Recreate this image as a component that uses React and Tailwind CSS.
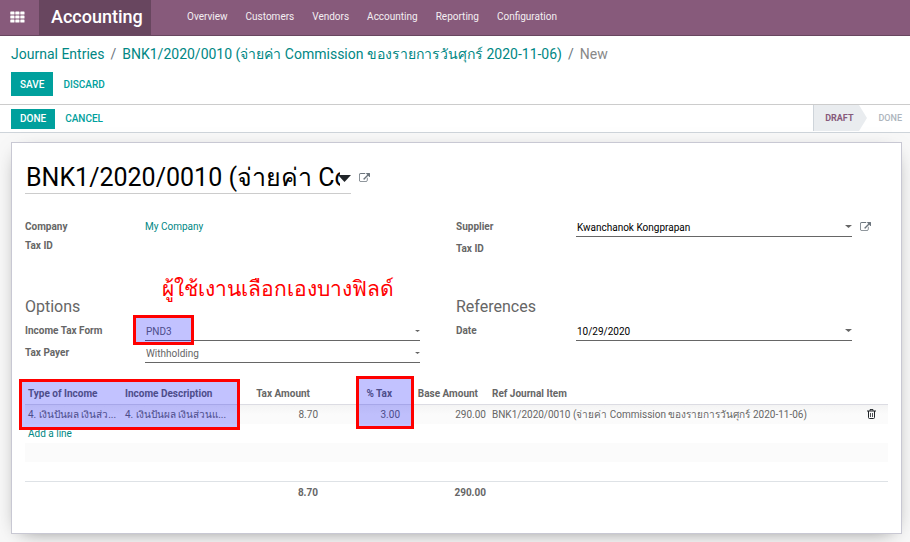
import React from "react";

const MENU = ["Overview", "Customers", "Vendors", "Accounting", "Reporting", "Configuration"];

const MOVE_NAME = "BNK1/2020/0010 (จ่ายค่า Commission ของรายการวันศุกร์ 2020-11-06)";

function AppsIcon() {
  return (
    <svg width="15" height="12" viewBox="0 0 15 12" fill="currentColor" aria-hidden="true">
      {[0, 4, 8].map((y) =>
        [0, 5, 10].map((x) => <rect key={`${x}-${y}`} x={x + 0.3} y={y + 0.4} width="4.200" height="3.100" rx="0.6" />)
      )}
    </svg>
  );
}

function ExternalIcon() {
  return (
    <svg width="11" height="10" viewBox="0 0 1792 1600" fill="currentColor" aria-hidden="true">
      <path d="M1408 800v320q0 119-84.500 203.500t-203.500 84.500h-832q-119 0-203.500-84.500t-84.500-203.500v-832q0-119 84.500-203.500t203.500-84.500h704q14 0 23 9t9 23v64q0 14-9 23t-23 9h-704q-66 0-113 47t-47 113v832q0 66 47 113t113 47h832q66 0 113-47t47-113v-320q0-14 9-23t23-9h64q14 0 23 9t9 23zm384-736v512q0 26-19 45t-45 19-45-19l-176-176-652 652q-10 10-23 10t-23-10l-114-114q-10-10-10-23t10-23l652-652-176-176q-19-19-19-45t19-45 45-19h512q26 0 45 19t19 45z" />
    </svg>
  );
}

function TrashIcon() {
  return (
    <svg width="9" height="10" viewBox="0 0 9 10" fill="none" stroke="currentColor" aria-hidden="true">
      <path d="M0 2h9M3 1.800V.6h3v1.200" />
      <path d="M1.500 2v6.500q0 1 1 1h4q1 0 1-1V2" />
      <path d="M3.500 4v4M5.500 4v4" strokeWidth="0.8" />
    </svg>
  );
}

function Caret({ className }) {
  return (
    <svg className={className} viewBox="0 0 8 4" fill="currentColor" preserveAspectRatio="none" aria-hidden="true">
      <path d="M0 0h8L4 4z" />
    </svg>
  );
}

function Label({ htmlFor, children }) {
  return (
    <label htmlFor={htmlFor} className="font-bold leading-[21px]">
      {children}
    </label>
  );
}

function SelectRow({ id, label, value, children }) {
  return (
    <div className="grid h-[22px] grid-cols-[120px_1fr_36px]">
      <Label htmlFor={id}>{label}</Label>
      <div className="relative h-[21px] border-b border-[#666]">
        <select id={id} defaultValue={value} className="block h-5 w-full appearance-none bg-transparent pt-0.5 pl-px outline-none">
          <option>{value}</option>
        </select>
        <Caret className="absolute top-[10px] right-0 h-[2px] w-[5px]" />
        {children}
      </div>
    </div>
  );
}

function InputRow({ id, label, value, link }) {
  return (
    <div className="grid h-[22px] grid-cols-[120px_1fr_36px]">
      <Label htmlFor={id}>{label}</Label>
      <div className="relative h-[21px] border-b border-[#666]">
        <input id={id} defaultValue={value} className="block h-5 w-full bg-transparent pt-0.5 pr-3 pl-px text-black outline-none" />
        <Caret className="absolute top-[9px] right-0 h-[3px] w-[7px]" />
      </div>
      {link && (
        <button type="button" aria-label="External link" className="flex h-[21px] items-center pl-2 text-[#6c757d]">
          <ExternalIcon />
        </button>
      )}
    </div>
  );
}

function StaticRow({ label, children }) {
  return (
    <div className="grid h-[19px] grid-cols-[120px_1fr_36px] leading-[21px]">
      <span className="font-bold">{label}</span>
      <span>{children}</span>
    </div>
  );
}

const MARK = "pointer-events-none absolute border-3 border-[#f00] bg-[#00f]/24";

export default function App() {
  return (
    <div className="min-h-screen bg-[#f8f8f8] font-['Roboto',sans-serif] text-[10px] text-[#666]">
      <header className="flex h-9 items-stretch border-b border-[#68465f] bg-[#875a7b] text-white">
        <button type="button" aria-label="Apps" className="flex w-[39px] items-center pb-0.5 pl-2.5">
          <AppsIcon />
        </button>
        <a href="#" className="flex w-28 items-center bg-[#68465f] px-3 pb-0.5 text-lg leading-none font-medium">
          Accounting
        </a>
        <nav className="ml-7 flex items-center gap-0.5 pb-0.5">
          {MENU.map((m) => (
            <a key={m} href="#" className="px-2 text-[#f3eef2]">
              {m}
            </a>
          ))}
        </nav>
      </header>

      <section className="border-b border-[#ccc] bg-white px-[11px] pt-2 pb-2">
        <nav className="flex h-5 items-center gap-[6px] whitespace-nowrap text-[14px] text-[#008784]">
          <a href="#">Journal Entries</a>
          <span className="text-[#6c757d]">/</span>
          <a href="#">{MOVE_NAME}</a>
          <span className="text-[#6c757d]">/</span>
          <span className="text-[#888]">New</span>
        </nav>
        <div className="mt-2 flex h-6 gap-[10px] font-medium">
          <button type="button" className="bg-[#00a09d] px-[9px] text-white">SAVE</button>
          <button type="button" className="text-[#00a09d]">DISCARD</button>
        </div>
      </section>

      <section className="flex h-7 items-stretch justify-between border-b border-[#ced4da] bg-white pl-[11px]">
        <div className="flex items-center gap-[10px] font-medium">
          <button type="button" className="h-5 bg-[#00a09d] px-[9px] text-white">DONE</button>
          <button type="button" className="text-[#00a09d]">CANCEL</button>
        </div>
        <div className="flex items-stretch pb-px text-[9px]">
          <div className="flex items-center border-l border-[#ced4da] bg-[#e9ecef] pt-0.5 pl-[11px] pr-[6px] font-bold text-[#875a7b]">DRAFT</div>
          <svg width="8" viewBox="0 0 8 26" preserveAspectRatio="none" className="h-full text-[#e9ecef]" fill="currentColor" aria-hidden="true">
            <path d="M0 0l8 13-8 13z" />
          </svg>
          <div className="flex items-center pt-0.5 pl-[11px] pr-2 font-medium text-[#adb5bd]">DONE</div>
        </div>
      </section>

      <main className="mx-[11px] mt-[9px] mr-2 border border-[#c8c8d3] bg-white px-[13px] pb-[30px] shadow-[0_5px_20px_-10px_rgba(0,0,0,0.6)]">
        <div className="flex items-center pt-4">
          <div className="relative h-[35px] w-[326px] border-b border-[#ccc]">
            <input
              aria-label="Journal entry"
              defaultValue={MOVE_NAME}
              className="block h-[34px] w-[315px] bg-transparent pt-1 pl-px text-[25px] text-black outline-none"
            />
            <Caret className="absolute top-4 right-0 h-[7px] w-[13px] text-[#212529]" />
          </div>
          <button type="button" aria-label="External link" className="px-2 pt-0.5 text-[#6c757d]">
            <ExternalIcon />
          </button>
        </div>

        <div className="mt-[22px] grid grid-cols-[1fr_432px]">
          <div>
            <StaticRow label="Company">
              <a href="#" className="text-[#008784]">My Company</a>
            </StaticRow>
            <StaticRow label="Tax ID" />
          </div>
          <div>
            <InputRow id="supplier" label="Supplier" value="Kwanchanok Kongprapan" link />
            <StaticRow label="Tax ID" />
          </div>
        </div>

        <div className="relative mt-[34px] grid grid-cols-[1fr_432px]">
          <div className="pointer-events-none absolute bottom-[59px] left-[137px] text-[21px] leading-8 whitespace-nowrap text-[#f00]">
            ผู้ใช้เงานเลือกเองบางฟิลด์
          </div>
          <section>
            <h2 className="h-[29px] pt-1 text-base leading-6">Options</h2>
            <SelectRow id="form" label="Income Tax Form" value="PND3">
              <div className={`${MARK} -top-[5px] -left-[12px] h-[30px] w-[61px]`} />
            </SelectRow>
            <SelectRow id="payer" label="Tax Payer" value="Withholding" />
          </section>
          <section>
            <h2 className="h-[29px] pt-1 text-base leading-6">References</h2>
            <InputRow id="date" label="Date" value="10/29/2020" />
          </section>
        </div>

        <div className="relative mt-[18px]">
          <table className="w-full table-fixed border-collapse">
            <colgroup>
              <col className="w-[97px]" />
              <col className="w-[114px]" />
              <col className="w-[85px]" />
              <col className="w-[82px]" />
              <col className="w-[86px]" />
              <col />
              <col className="w-[34px]" />
            </colgroup>
            <thead>
              <tr className="h-[22px] border-b border-[#dcdce3] text-left whitespace-nowrap">
                <th className="p-0 pt-0.5 pl-[3px]">Type of Income</th>
                <th className="p-0 pt-0.5 pl-[3px]">Income Description</th>
                <th className="p-0 pt-0.5 pr-[11px] text-right">Tax Amount</th>
                <th className="p-0 pt-0.5 pr-[11px] text-right">% Tax</th>
                <th className="p-0 pt-0.5 pr-[11px] text-right">Base Amount</th>
                <th className="p-0 pt-0.5 pl-[3px]">Ref Journal Item</th>
                <th className="p-0" />
              </tr>
            </thead>
            <tbody>
              <tr className="h-[19px] bg-linear-to-b from-[#f3f3f3] to-[#fbfbfb] to-50% leading-[18px] whitespace-nowrap">
                <td className="p-0 pt-px pl-[3px]">4. เงินปันผล เงินส่ว...</td>
                <td className="p-0 pt-px pl-[3px]">4. เงินปันผล เงินส่วนแ...</td>
                <td className="p-0 pt-px pr-[3px] text-right">8.70</td>
                <td className="p-0 pt-px pr-[3px] text-right">3.00</td>
                <td className="p-0 pt-px pr-[3px] text-right">290.00</td>
                <td className="p-0 pt-px pl-[3px]">{MOVE_NAME}</td>
                <td className="p-0">
                  <button type="button" aria-label="Delete row" className="mx-auto block text-[#212529]">
                    <TrashIcon />
                  </button>
                </td>
              </tr>
              <tr className="h-[19px] leading-[18px]">
                <td colSpan={7} className="p-0 pt-px pl-[3px]">
                  <a href="#" className="text-[#008784]">Add a line</a>
                </td>
              </tr>
              <tr className="h-[19px] bg-[#fbfbfb]"><td colSpan={7} className="p-0" /></tr>
              <tr className="h-5"><td colSpan={7} className="p-0" /></tr>
            </tbody>
            <tfoot>
              <tr className="h-[21px] border-t border-[#dee2e6] text-right font-bold">
                <td colSpan={2} className="p-0" />
                <td className="p-0 pr-[3px]">8.70</td>
                <td className="p-0" />
                <td className="p-0 pr-[3px]">290.00</td>
                <td colSpan={2} className="p-0" />
              </tr>
            </tfoot>
          </table>
          <div className={`${MARK} -top-[3px] -left-1.5 h-[51px] w-[221px]`} />
          <div className={`${MARK} -top-1.5 left-[331px] h-[53px] w-[58px]`} />
        </div>
      </main>
    </div>
  );
}
